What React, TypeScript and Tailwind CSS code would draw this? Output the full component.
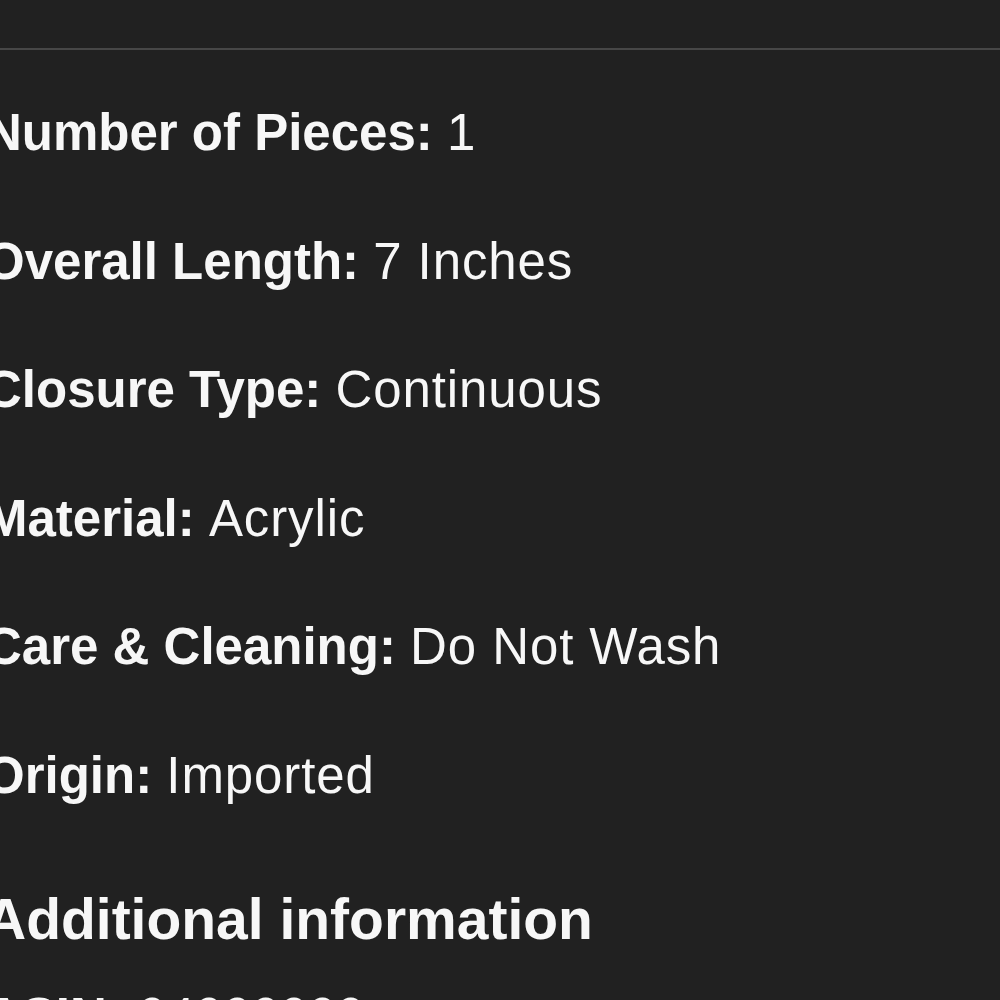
const details = [
  { label: "Number of Pieces:", value: "1" },
  { label: "Overall Length:", value: "7 Inches" },
  { label: "Closure Type:", value: "Continuous" },
  { label: "Material:", value: "Acrylic" },
  { label: "Care & Cleaning:", value: "Do Not Wash" },
  { label: "Origin:", value: "Imported" },
];

const App = () => {
  return (
    <div className="h-[1000px] w-[1000px] overflow-hidden bg-[#212121] text-[#f7f7f7] font-['Liberation_Sans',Arial,sans-serif]">
      {/* top divider */}
      <div className="h-[48px]" />
      <div className="h-[2px] bg-[#474747]" />

      <div className="-ml-[15px] pt-[52px]">
        <div className="flex flex-col gap-[67px]">
          {details.map((d) => (
            <p key={d.label} className="text-[51px] leading-[61.5px] whitespace-nowrap">
              <span className="font-bold">{d.label}</span>{" "}
              <span className="tracking-[0.9px]">{d.value}</span>
            </p>
          ))}
        </div>

        <h2 className="mt-[79px] text-[57px] leading-[68px] font-bold whitespace-nowrap">
          Additional information
        </h2>

        <p className="mt-[33px] text-[51px] leading-[61.5px] whitespace-nowrap">
          <span className="font-bold">ASIN:</span> 04000000
        </p>
      </div>
    </div>
  );
};

export default App;
